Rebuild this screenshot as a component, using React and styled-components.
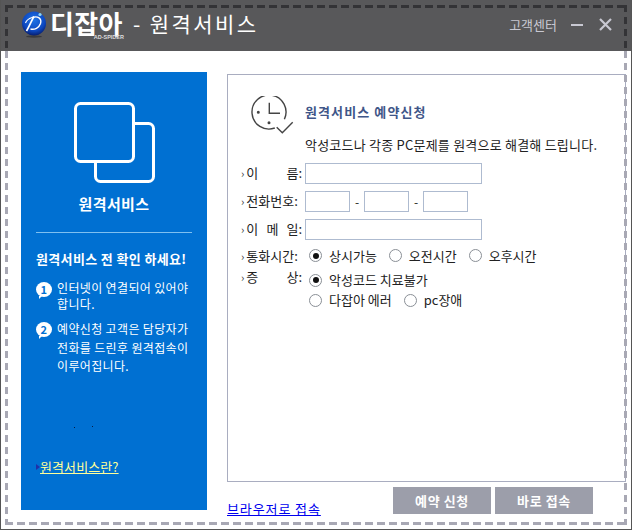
import React from 'react';
import styled, { createGlobalStyle } from 'styled-components';

const Global = createGlobalStyle`
  html, body { margin: 0; padding: 0; background: #fff; }
  body { font-family: "Noto Sans CJK KR", "Liberation Sans", sans-serif; }
  * { box-sizing: border-box; }
`;

const Window = styled.div`
  position: relative;
  width: 632px;
  height: 530px;
  background: #fff;
  border-left: 1px solid #555;
  border-right: 1px solid #555;
  border-bottom: 1px solid #555;
  overflow: hidden;
  display: flex;
  flex-direction: column;
`;

const Header = styled.header`
  height: 51px;
  flex: none;
  background: #58585a;
  display: flex;
  align-items: center;
  padding: 0 19px 0 20px;
`;

const Brand = styled.div`
  position: relative;
  font-size: 26px;
  line-height: 22px;
  font-weight: 700;
  color: #fff;
  margin-left: 3px;
  letter-spacing: 0.3px;
  width: 74px;
  margin-top: -5px;
  white-space: nowrap;
`;

const BrandSub = styled.span`
  position: absolute;
  right: 0;
  top: 22px;
  font: 700 5.5px/6px "Liberation Sans", sans-serif;
  letter-spacing: 0;
  color: #ddd;
`;

const Title = styled.h1`
  margin: -5px 0 0 9px;
  font-size: 21px;
  line-height: 26px;
  font-weight: 400;
  color: #fff;
  letter-spacing: 2.4px;
  flex: 1;
  white-space: nowrap;
`;

const Help = styled.span`
  font-size: 13px;
  color: #c8c8d2;
  margin-right: 14px;
  margin-top: -2px;
  white-space: nowrap;
`;

const Body = styled.div`
  flex: 1;
  display: flex;
  gap: 20px;
  padding: 21px 5px 0 20px;
`;

const Sidebar = styled.aside`
  width: 186px;
  height: 438px;
  flex: none;
  background: #0070d2;
  color: #fff;
  position: relative;
  padding: 30px 15px 0;
  display: flex;
  flex-direction: column;
`;

const SideIcon = styled.svg`
  width: 81px;
  height: 81px;
  display: block;
  margin-left: 38px;
  flex: none;
`;

const SideTitle = styled.h2`
  margin: 11px 0 0;
  text-align: center;
  font-size: 15px;
  line-height: 20px;
  font-weight: 700;
  letter-spacing: 0.4px;
`;

const Divider = styled.hr`
  margin: 18px 0 0;
  border: 0;
  height: 1px;
  background: #7fc0f0;
`;

const Notice = styled.p`
  margin: 17px 0 0;
  font-size: 13px;
  line-height: 18px;
  font-weight: 700;
  letter-spacing: 0.35px;
  white-space: nowrap;
`;

const Step = styled.div`
  display: flex;
  gap: 5px;
  margin-top: ${p => p.$top}px;
  font-size: 12px;
  line-height: ${p => p.$lh}px;
  letter-spacing: 0.35px;
  white-space: nowrap;
`;

const Bubble = styled.span`
  position: relative;
  flex: none;
  width: 16px;
  height: 15px;
  margin-top: 2px;
  border-radius: 50%;
  background: #fff;
  color: #0070d2;
  font-size: 11px;
  line-height: 15px;
  font-weight: 700;
  text-align: center;
  &::after {
    content: "";
    position: absolute;
    left: 3px;
    bottom: -2px;
    border-left: 3px solid #fff;
    border-bottom: 3px solid transparent;
  }
`;

const SideLink = styled.a`
  position: absolute;
  left: 19px;
  top: 387px;
  font-size: 13px;
  line-height: 16px;
  color: #ffff99;
  text-decoration: underline;
  letter-spacing: 0.1px;
  &::before {
    content: "";
    position: absolute;
    left: -4px;
    top: 5px;
    border-left: 4px solid #2030a8;
    border-top: 3.5px solid transparent;
    border-bottom: 3.5px solid transparent;
  }
`;

const Speck = styled.i`
  position: absolute;
  width: 1px;
  height: 1px;
  background: #0a1a40;
  left: ${p => p.$x}px;
  top: ${p => p.$y}px;
`;

const Main = styled.main`
  flex: 1;
  display: flex;
  flex-direction: column;
  min-width: 0;
`;

const FormBox = styled.section`
  height: 408px;
  flex: none;
  margin-top: 2px;
  border: 1px solid #a9adc0;
  padding: 21px 0 0 13px;
  color: #222;
`;

const Heading = styled.div`
  display: flex;
  align-items: flex-start;
`;

const Clock = styled.svg`
  width: 48px;
  height: 42px;
  flex: none;
  margin-left: 9px;
`;

const HeadingTitle = styled.h3`
  margin: 7px 0 0 7px;
  font-size: 13px;
  line-height: 18px;
  font-weight: 700;
  color: #3f5688;
  letter-spacing: 1.1px;
  white-space: nowrap;
`;

const Lead = styled.p`
  margin: -2px 0 0 64px;
  font-size: 13px;
  line-height: 18px;
  letter-spacing: 0.22px;
  white-space: nowrap;
`;

const Form = styled.div`
  margin-top: 5px;
`;

const Row = styled.div`
  display: flex;
  align-items: ${p => p.$top ? 'flex-start' : 'center'};
  min-height: ${p => p.$h || 28}px;
`;

const Label = styled.span`
  width: 64px;
  padding-right: 3px;
  flex: none;
  font-size: 13px;
  line-height: 18px;
  display: flex;
  white-space: nowrap;
  &::before {
    content: "›";
    margin-right: 2px;
    font-size: 11px;
    color: #333;
  }
`;

const LabelText = styled.span`
  flex: 1;
  display: flex;
  justify-content: space-between;
`;

const Input = styled.input`
  width: ${p => p.$w}px;
  height: 21px;
  border: 1px solid #aebbd0;
  background: #fff;
  padding: 0;
  display: block;
  outline: none;
`;

const Dash = styled.span`
  width: 14px;
  text-align: center;
  font-size: 12px;
`;

const Options = styled.div`
  display: flex;
  flex-direction: column;
  gap: 2px;
  margin-left: 4px;
  margin-top: ${p => p.$top || 0}px;
`;

const OptionLine = styled.div`
  display: flex;
  gap: 12px;
  height: 18px;
  align-items: center;
`;

const Option = styled.label`
  display: flex;
  align-items: center;
  gap: 7px;
  font-size: 13px;
  line-height: 18px;
  white-space: nowrap;
`;

const Radio = styled.span`
  position: relative;
  width: 13px;
  height: 13px;
  border-radius: 50%;
  border: 1px solid #8a8f96;
  background: #fff;
  flex: none;
  &::after {
    content: "";
    display: ${p => p.$on ? 'block' : 'none'};
    position: absolute;
    left: 2.5px;
    top: 2.5px;
    width: 6px;
    height: 6px;
    border-radius: 50%;
    background: #111;
  }
`;

const Footer = styled.div`
  display: flex;
  align-items: flex-start;
  padding-top: 5px;
`;

const BrowserLink = styled.a`
  margin-top: 14px;
  font-size: 13px;
  line-height: 16px;
  color: #0000ee;
  text-decoration: underline;
  letter-spacing: 0.9px;
  white-space: nowrap;
  width: 94px;
`;

const Actions = styled.div`
  margin-left: 72px;
  display: flex;
  gap: 4px;
`;

const Action = styled.button`
  width: 98px;
  height: 27px;
  border: 0;
  padding: 0;
  background: #9c9eaa;
  color: #fff;
  font: 700 13px/27px "Noto Sans CJK KR", sans-serif;
  letter-spacing: 0.6px;
`;

const DashFrame = styled.div`
  position: absolute;
  pointer-events: none;
  left: 4px;
  width: 622px;
  top: ${p => p.$top}px;
  height: ${p => p.$h}px;
  background:
    ${p => p.$first ? `repeating-linear-gradient(90deg, ${p.$c} 0 8px, transparent 8px 12px) left top / 100% 3px no-repeat,` : ''}
    ${p => p.$last ? `repeating-linear-gradient(90deg, ${p.$c} 0 8px, transparent 8px 12px) left bottom / 100% 3px no-repeat,` : ''}
    repeating-linear-gradient(180deg, ${p => p.$c} 0 7px, transparent 7px 12px) left top / 3px 100% no-repeat,
    repeating-linear-gradient(180deg, ${p => p.$c} 0 7px, transparent 7px 12px) right top / 3px 100% no-repeat;
`;

const Close = styled.svg`
  width: 13px;
  height: 13px;
  margin-left: 16px;
  margin-top: -2px;
  flex: none;
`;

const Minus = styled.span`
  display: block;
  width: 12px;
  height: 2px;
  background: #c8c8d2;
  margin-top: -2px;
  flex: none;
`;

const LogoMark = styled.svg`
  flex: none;
  margin-top: -3px;
`;

const Logo = () => (
  <LogoMark width="26" height="27" viewBox="0 0 26 27" aria-hidden="true">
    <defs>
      <radialGradient id="lg" cx="50%" cy="35%" r="65%">
        <stop offset="0%" stopColor="#1f74e6" />
        <stop offset="70%" stopColor="#0d48c0" />
        <stop offset="100%" stopColor="#061e70" />
      </radialGradient>
    </defs>
    <ellipse cx="13" cy="25.5" rx="8" ry="1.2" fill="#3a3a3c" />
    <circle cx="13" cy="12.5" r="12" fill="url(#lg)" />
    <circle cx="19" cy="3.5" r="1.6" fill="#8fd4f0" />
    <path d="M11 6.5 C17 4.5 21 7.5 19.5 12.5 C18 17 13.5 19 9.5 18" fill="none" stroke="#fff" strokeWidth="1.4" />
    <path d="M13 5.5 C11 8.5 9 14 5.5 20" fill="none" stroke="#fff" strokeWidth="1.7" />
    <path d="M4.5 12 C5.5 9 8 7.5 11 6.5" fill="none" stroke="#fff" strokeWidth="1.1" />
  </LogoMark>
);

const Lbl = ({ chars }) => (
  <Label>
    <LabelText>{chars.map((c, i) => <span key={i}>{c}</span>)}</LabelText>
  </Label>
);

const Opt = ({ on, children }) => (
  <Option><Radio $on={on} />{children}</Option>
);

export default function App() {
  return (
    <Window>
      <Global />
      <Header>
        <Logo />
        <Brand>디잡아<BrandSub>AD-SPIDER</BrandSub></Brand>
        <Title>- 원격서비스</Title>
        <Help>고객센터</Help>
        <Minus />
        <Close viewBox="0 0 13 13"><path d="M1 1 L12 12 M12 1 L1 12" stroke="#c8c8d2" strokeWidth="2.2" /></Close>
      </Header>
      <Body>
        <Sidebar>
          <SideIcon viewBox="0 0 81 81" fill="none" stroke="#fff" strokeWidth="3">
            <rect x="21.5" y="21.5" width="58" height="58" rx="5" />
            <rect x="1.5" y="1.5" width="58" height="58" rx="5" fill="#0070d2" />
          </SideIcon>
          <SideTitle>원격서비스</SideTitle>
          <Divider />
          <Notice>원격서비스 전 확인 하세요!</Notice>
          <Step $top={12} $lh={16}><Bubble>1</Bubble><span>인터넷이 연결되어 있어야<br />합니다.</span></Step>
          <Step $top={8} $lh={18.5}><Bubble>2</Bubble><span>예약신청 고객은 담당자가<br />전화를 드린후 원격접속이<br />이루어집니다.</span></Step>
          <Speck $x={53} $y={355} />
          <Speck $x={71} $y={354} />
          <SideLink>원격서비스란?</SideLink>
        </Sidebar>
        <Main>
          <FormBox>
            <Heading>
              <Clock viewBox="0 0 48 42" fill="none" stroke="#444" strokeWidth="1.4">
                <path d="M34.4 23.2 A17 17 0 1 0 24.8 32" />
                <path d="M19.3 6.7 V17.3 H30" />
                <circle cx="8.3" cy="16.3" r="0.8" fill="#444" />
                <circle cx="19" cy="26.7" r="0.8" fill="#444" />
                <path d="M26.7 31.3 L32.3 36.7 L42.7 26.3" />
              </Clock>
              <HeadingTitle>원격서비스 예약신청</HeadingTitle>
            </Heading>
            <Lead>악성코드나 각종 PC문제를 원격으로 해결해 드립니다.</Lead>
            <Form>
              <Row><Lbl chars={['이', '름:']} /><Input $w={177} /></Row>
              <Row>
                <Lbl chars={['전화번호:']} />
                <Input $w={45} /><Dash>-</Dash><Input $w={45} /><Dash>-</Dash><Input $w={45} />
              </Row>
              <Row><Lbl chars={['이', '메', '일:']} /><Input $w={177} /></Row>
              <Row $h={25}>
                <Lbl chars={['통화시간:']} />
                <Options>
                  <OptionLine><Opt on>상시가능</Opt><Opt>오전시간</Opt><Opt>오후시간</Opt></OptionLine>
                </Options>
              </Row>
              <Row $top $h={44}>
                <Lbl chars={['증', '상:']} />
                <Options $top={3}>
                  <OptionLine><Opt on>악성코드 치료불가</Opt></OptionLine>
                  <OptionLine><Opt>다잡아 에러</Opt><Opt>pc장애</Opt></OptionLine>
                </Options>
              </Row>
            </Form>
          </FormBox>
          <Footer>
            <BrowserLink>브라우저로 접속</BrowserLink>
            <Actions>
              <Action>예약 신청</Action>
              <Action>바로 접속</Action>
            </Actions>
          </Footer>
        </Main>
      </Body>
      <DashFrame $first $c="#333336" $top={5} $h={46} />
      <DashFrame $last $c="#a8a8b4" $top={51} $h={474} />
    </Window>
  );
}
